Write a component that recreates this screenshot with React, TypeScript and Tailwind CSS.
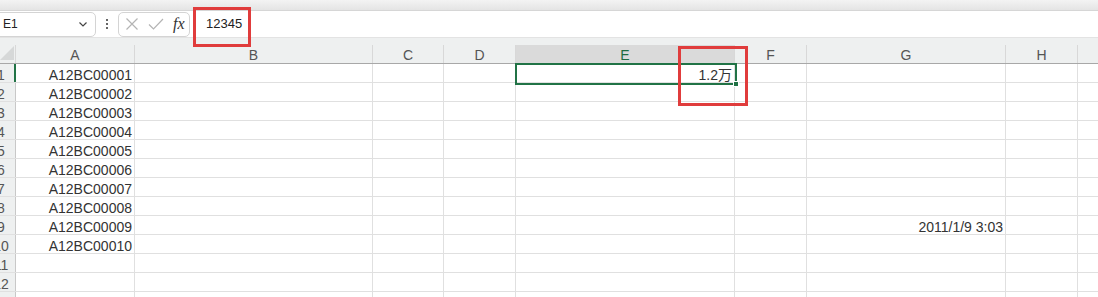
import React from "react";

const cols = [
  { key: "A", w: "w-[119px]" },
  { key: "B", w: "w-[238px]" },
  { key: "C", w: "w-[71px]" },
  { key: "D", w: "w-[72px]" },
  { key: "E", w: "w-[219px]" },
  { key: "F", w: "w-[72px]" },
  { key: "G", w: "w-[199px]" },
  { key: "H", w: "w-[72px]" },
  { key: "", w: "w-[40px]" },
];

const cells: Record<string, string> = {
  E1: "1.2万",
  G9: "2011/1/9 3:03",
};
for (let i = 1; i <= 10; i++) {
  cells["A" + i] = "A12BC" + String(i).padStart(5, "0");
}

const rows = Array.from({ length: 13 }, (_, i) => i + 1);

export default function App() {
  return (
    <div className="relative w-[1098px] h-[297px] overflow-hidden bg-white font-['Liberation_Sans','Noto_Sans_CJK_SC',sans-serif] text-[14px] text-[#222]">
      {/* ribbon edge */}
      <div className="h-[11px] bg-gradient-to-b from-[#f3f3f3] to-[#e4e4e4] border-b border-[#d6d6d6]" />

      {/* formula bar */}
      <div className="h-[27px] flex items-center bg-white border-b border-[#e3e3e3]">
        <div className="ml-[-6px] w-[102px] h-[25px] flex items-center justify-between pl-[8px] pr-[6px] border border-[#d4d4d4] rounded-[5px] text-[12px] text-[#222]">
          <span>E1</span>
          <svg width="12" height="12" viewBox="0 0 12 12" fill="none" stroke="#444" strokeWidth="1.2">
            <path d="M2.5 4.5 L6 8 L9.5 4.5" />
          </svg>
        </div>
        <div className="w-[22px] flex flex-col items-center gap-[2px]">
          <span className="w-[2px] h-[2px] bg-[#333] rounded-full" />
          <span className="w-[2px] h-[2px] bg-[#333] rounded-full" />
          <span className="w-[2px] h-[2px] bg-[#333] rounded-full" />
        </div>
        <div className="w-[72px] h-[25px] flex items-center gap-[9px] pl-[6px] border border-[#d4d4d4] rounded-[5px]">
          <svg width="14" height="14" viewBox="0 0 14 14" fill="none" stroke="#b4b4b4" strokeWidth="1.2">
            <path d="M1.5 1.5 L12.5 12.5 M12.5 1.5 L1.5 12.5" />
          </svg>
          <svg width="16" height="14" viewBox="0 0 16 14" fill="none" stroke="#b4b4b4" strokeWidth="1.2">
            <path d="M1 7.5 L5.5 12 L15 2" />
          </svg>
          <span className="font-['Liberation_Serif',serif] italic text-[16px] text-[#333] leading-none">fx</span>
        </div>
        <div className="pl-[16px] text-[13px] text-[#222]">12345</div>
      </div>

      {/* column header */}
      <div className="h-[26px] flex flex-col bg-[#eef0f0] border-b border-[#a8a8a8]">
        <div className="h-[7px]" />
        <div className="flex h-[18px]">
          <div className="relative w-[16px] shrink-0 border-r border-[#d8d8d8]">
            <div className="absolute left-0 bottom-[3px] w-0 h-0 border-l-[14px] border-l-transparent border-b-[14px] border-b-[#d6d8d8]" />
          </div>
          {cols.map((c) => (
            <div
              key={c.key + "h"}
              className={`${c.w} shrink-0 text-center leading-[20px] border-r border-[#d8d8d8] ${
                c.key === "E" ? "bg-[#dadada] text-[#1e6b41]" : "text-[#555]"
              }`}
            >
              {c.key}
            </div>
          ))}
        </div>
      </div>

      {/* rows */}
      {rows.map((r) => (
        <div key={r} className="h-[19px] flex border-b border-[#e0e0e0]">
          <div
            className={`w-[16px] shrink-0 overflow-hidden bg-[#eef0f0] text-[#555] ${
              r === 1 ? "border-r-2 border-[#217346] bg-[#e2e3e3]" : "border-r border-[#c8c8c8]"
            }`}
          >
            <div className="w-[30px] ml-[-14px] text-center leading-[22px]">{r}</div>
          </div>
          {cols.map((c) => (
            <div
              key={c.key + r}
              className={`${c.w} shrink-0 border-r border-[#e0e0e0] text-right pr-[2px] leading-[22px] whitespace-nowrap text-[#333]`}
            >
              {cells[c.key + r] ?? ""}
            </div>
          ))}
        </div>
      ))}

      {/* selection E1 */}
      <div className="absolute left-[515px] top-[63px] w-[222px] h-[22px] border-2 border-[#217346]">
        <div className="absolute right-[-4px] bottom-[-4px] w-[6px] h-[6px] bg-[#217346] border border-white" />
      </div>

      {/* annotations */}
      <div className="absolute left-[193px] top-[7px] w-[58px] h-[40px] border-[3px] border-[#e03c3c]" />
      <div className="absolute left-[678px] top-[46px] w-[70px] h-[60px] border-[3px] border-[#e03c3c]" />
    </div>
  );
}
